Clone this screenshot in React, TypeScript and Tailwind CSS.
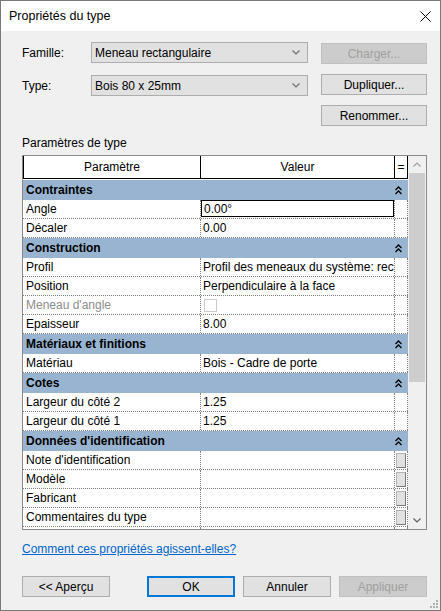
import React from "react";

type Row = {
    name: string;
    value?: string;
    focus?: boolean;
    disabled?: boolean;
    checkbox?: boolean;
    button?: boolean;
};

const groups: { title: string; rows: Row[] }[] = [
    {
        title: "Contraintes",
        rows: [
            { name: "Angle", value: "0.00°", focus: true },
            { name: "Décaler", value: "0.00" },
        ],
    },
    {
        title: "Construction",
        rows: [
            { name: "Profil", value: "Profil des meneaux du système: rectangulaire" },
            { name: "Position", value: "Perpendiculaire à la face" },
            { name: "Meneau d'angle", disabled: true, checkbox: true },
            { name: "Epaisseur", value: "8.00" },
        ],
    },
    {
        title: "Matériaux et finitions",
        rows: [{ name: "Matériau", value: "Bois - Cadre de porte" }],
    },
    {
        title: "Cotes",
        rows: [
            { name: "Largeur du côté 2", value: "1.25" },
            { name: "Largeur du côté 1", value: "1.25" },
        ],
    },
    {
        title: "Données d'identification",
        rows: [
            { name: "Note d'identification", button: true },
            { name: "Modèle", button: true },
            { name: "Fabricant", button: true },
            { name: "Commentaires du type", button: true },
            { name: "URL", button: true },
        ],
    },
];

function Chevron({ up, color }: { up?: boolean; color: string }) {
    return (
        <svg width="8" height="5" viewBox="0 0 8 5">
            <path d={up ? "M0.5 4.5 L4 1 L7.5 4.5" : "M0.5 0.5 L4 4 L7.5 0.5"} fill="none" stroke={color} strokeWidth="1.2" />
        </svg>
    );
}

function DoubleCaret() {
    return (
        <svg width="7" height="9" viewBox="0 0 7 9">
            <path d="M0.5 4 L3.5 1 L6.5 4 M0.5 8 L3.5 5 L6.5 8" fill="none" stroke="#000" strokeWidth="1.3" />
        </svg>
    );
}

function Combo(props: { text: string }) {
    return (
        <div className="w-[217px] h-[21px] border border-[#adadad] bg-[#e1e1e1] flex items-center justify-between pl-[3px] pr-[7px]">
            <span>{props.text}</span>
            <Chevron color="#707070" />
        </div>
    );
}

function Btn(props: { label: string; disabled?: boolean; primary?: boolean; className?: string }) {
    const base = "h-[21px] w-[88px] flex items-center justify-center ";
    let look = "bg-[#e1e1e1] border border-[#adadad]";
    if (props.disabled) look = "bg-[#cccccc] border border-[#bfbfbf] text-[#a0a0a0]";
    if (props.primary) look = "bg-[#e1e1e1] border-2 border-[#0078d7]";
    return <div className={base + look + " " + (props.className || "")}>{props.label}</div>;
}

function ParamRow({ row }: { row: Row }) {
    return (
        <div className="h-[19px] flex border-b border-dotted border-[#808080]">
            <div className={"w-[178px] shrink-0 border-r border-dotted border-[#808080] pl-[3px] flex items-center whitespace-nowrap overflow-hidden " + (row.disabled ? "text-[#8c8c8c]" : "")}>
                {row.name}
            </div>
            <div className="w-[194px] shrink-0 border-r border-dotted border-[#808080] flex items-start whitespace-nowrap overflow-hidden">
                {row.focus ? (
                    <div className="w-full h-[17px] border border-black pl-[2px] flex items-center">{row.value}</div>
                ) : row.checkbox ? (
                    <div className="w-[13px] h-[13px] border border-[#cccccc] bg-white ml-[3px] mt-[3px]"></div>
                ) : (
                    <div className="h-full pl-[2px] flex items-center">{row.value}</div>
                )}
            </div>
            <div className="w-[13px] shrink-0 border-r border-dotted border-[#808080] flex items-center justify-center">
                {row.button && (
                    <div className="w-[10px] h-[15px] bg-[#e1e1e1] border border-[#b4b4b4] border-r-[#7a7a7a] border-b-[#7a7a7a]"></div>
                )}
            </div>
        </div>
    );
}

export default function App() {
    return (
        <div className="relative w-[441px] h-[611px] border border-[#7a7a7a] bg-[#f0f0f0] flex flex-col text-[12px] text-black font-['Liberation_Sans',sans-serif]">
            <div className="h-[30px] shrink-0 bg-white flex items-center justify-between pl-[8px] pr-[9px]">
                <span className="text-[12.5px]">Propriétés du type</span>
                <svg width="11" height="11" viewBox="0 0 11 11">
                    <path d="M0.5 0.5 L10.5 10.5 M10.5 0.5 L0.5 10.5" stroke="#000" strokeWidth="1" />
                </svg>
            </div>

            <div className="flex flex-col pl-[21px] pr-[13px]">
                <div className="flex mt-[11px]">
                    <div className="flex flex-col gap-[12px]">
                        <div className="flex items-center">
                            <div className="w-[69px]">Famille:</div>
                            <Combo text="Meneau rectangulaire" />
                        </div>
                        <div className="flex items-center">
                            <div className="w-[69px]">Type:</div>
                            <Combo text="Bois 80 x 25mm" />
                        </div>
                    </div>
                    <div className="ml-auto mt-[1px] flex flex-col gap-[10px]">
                        <Btn label="Charger..." disabled className="w-[106px]" />
                        <Btn label="Dupliquer..." className="w-[106px]" />
                        <Btn label="Renommer..." className="w-[106px]" />
                    </div>
                </div>

                <div className="mt-[10px] leading-[15px]">Paramètres de type</div>

                <div className="mt-[4px] h-[375px] w-[405px] border border-[#8a8a8a] flex">
                    <div className="w-[385px] bg-white overflow-hidden">
                        <div className="h-[23px] flex border-b border-l border-black mb-px">
                            <div className="w-[177px] shrink-0 border-r border-black flex items-center justify-center">Paramètre</div>
                            <div className="w-[194px] shrink-0 border-r border-black flex items-center justify-center">Valeur</div>
                            <div className="w-[13px] shrink-0 border-r border-black flex items-center justify-center">=</div>
                        </div>
                        {groups.map((g) => (
                            <div key={g.title}>
                                <div className="h-[20px] bg-[#99b4d1] flex items-center justify-between pl-[3px] pr-[6px] font-bold">
                                    <span>{g.title}</span>
                                    <DoubleCaret />
                                </div>
                                {g.rows.map((r) => (
                                    <ParamRow key={r.name} row={r} />
                                ))}
                            </div>
                        ))}
                    </div>
                    <div className="w-[18px] bg-[#f0f0f0] flex flex-col">
                        <div className="h-[17px] flex items-center justify-center">
                            <Chevron up color="#a0a0a0" />
                        </div>
                        <div className="h-[209px] mx-px bg-[#cdcdcd]"></div>
                        <div className="flex-1"></div>
                        <div className="h-[17px] flex items-center justify-center">
                            <Chevron color="#606060" />
                        </div>
                    </div>
                </div>

                <div className="mt-[12px] leading-[15px] text-[#0066cc] underline">Comment ces propriétés agissent-elles?</div>

                <div className="mt-[19px] flex">
                    <Btn label="<< Aperçu" />
                    <Btn label="OK" primary className="ml-[37px]" />
                    <Btn label="Annuler" className="ml-[8px]" />
                    <Btn label="Appliquer" disabled className="ml-[8px]" />
                </div>
            </div>

            <svg className="absolute right-[2px] bottom-[2px]" width="8" height="8" viewBox="0 0 8 8">
                <rect x="6" y="0" width="2" height="2" fill="#b0b0b0" />
                <rect x="3" y="3" width="2" height="2" fill="#b0b0b0" />
                <rect x="6" y="3" width="2" height="2" fill="#b0b0b0" />
                <rect x="0" y="6" width="2" height="2" fill="#b0b0b0" />
                <rect x="3" y="6" width="2" height="2" fill="#b0b0b0" />
                <rect x="6" y="6" width="2" height="2" fill="#b0b0b0" />
            </svg>
        </div>
    );
}
